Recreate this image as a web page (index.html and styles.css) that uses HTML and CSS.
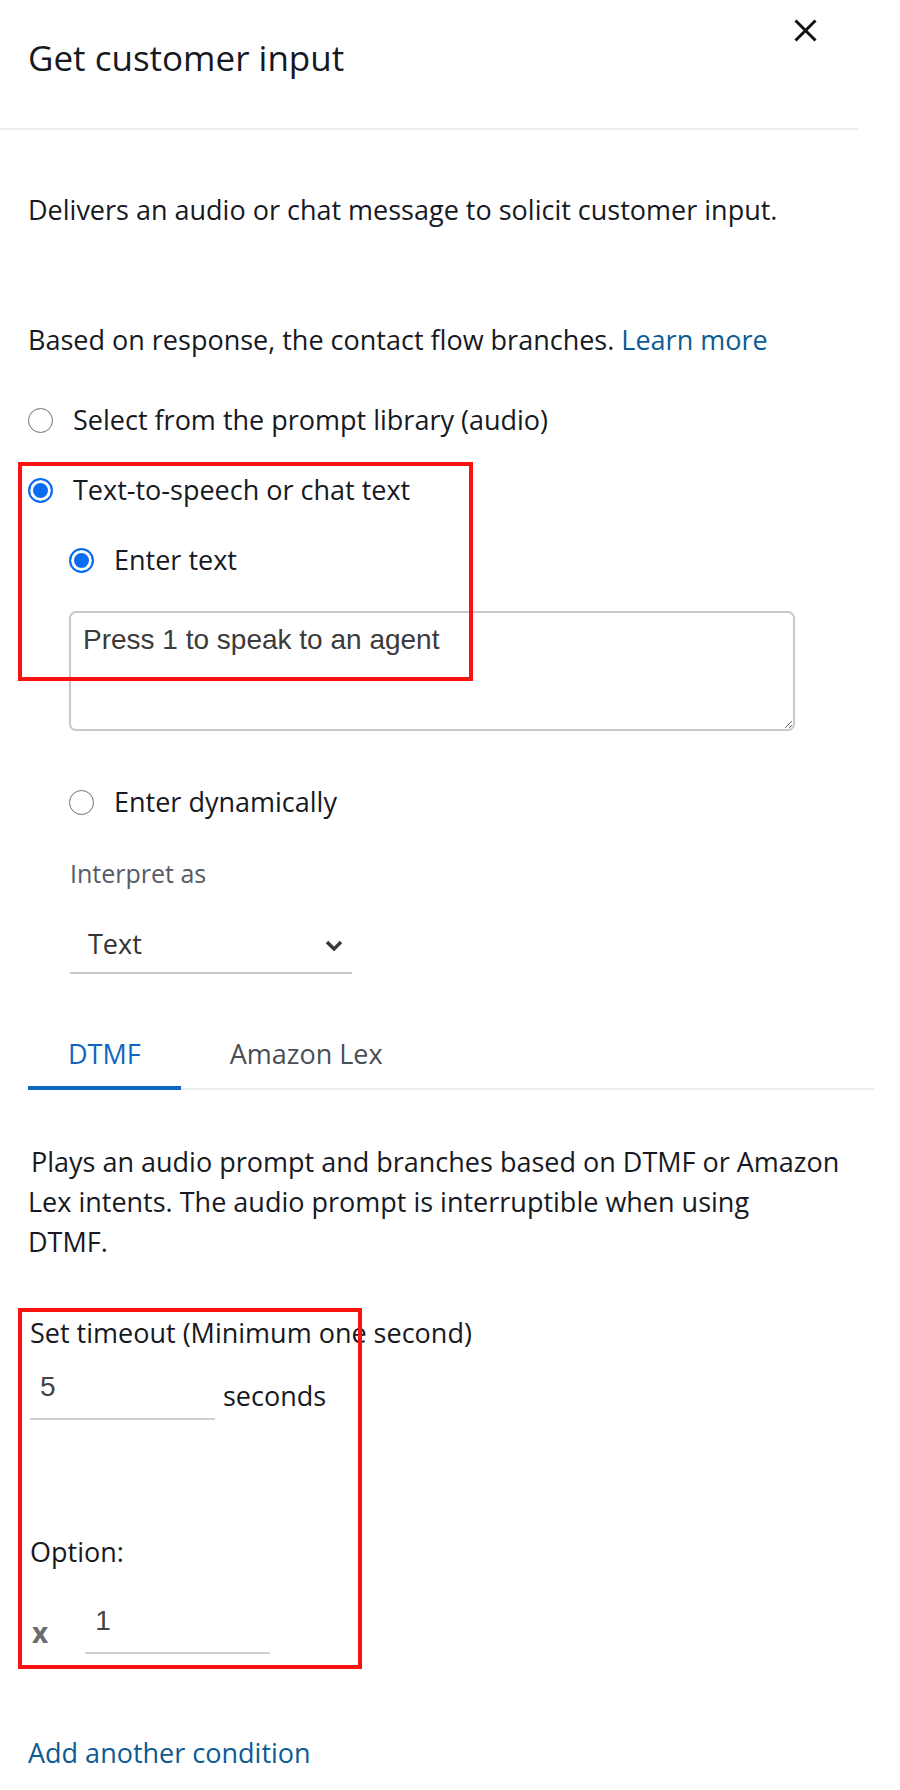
FILE: index.html
```html
<!DOCTYPE html>
<html lang="en">
<head>
<meta charset="utf-8">
<title>Get customer input</title>
<link rel="stylesheet" href="styles.css">
</head>
<body>
<div class="panel">
  <header class="panel-header">
    <h1 class="title">Get customer input</h1>
    <button class="close" aria-label="Close">
      <svg width="23" height="23" viewBox="0 0 23 23"><path d="M1.5 1.5 L21.5 21.5 M21.5 1.5 L1.5 21.5" stroke="#111" stroke-width="3" fill="none"/></svg>
    </button>
  </header>

  <div class="panel-body">
    <p class="desc">Delivers an audio or chat message to solicit customer input.</p>
    <p class="desc branch">Based on response, the contact flow branches. <a class="link" href="#">Learn more</a></p>

    <div class="radio-row first"><span class="radio"></span><span>Select from the prompt library (audio)</span></div>
    <div class="radio-row"><span class="radio checked"></span><span>Text-to-speech or chat text</span></div>

    <div class="sub">
      <div class="radio-row"><span class="radio checked"></span><span>Enter text</span></div>
      <textarea class="tts">Press 1 to speak to an agent</textarea>
      <div class="radio-row dynamic"><span class="radio"></span><span>Enter dynamically</span></div>
      <div class="field-label">Interpret as</div>
      <div class="select">
        <span>Text</span>
        <svg width="18" height="11" viewBox="0 0 18 11"><path d="M2 2 L9 9 L16 2" stroke="#3a3a3a" stroke-width="3.4" fill="none"/></svg>
      </div>
    </div>

    <div class="tabs">
      <div class="tab active">DTMF</div>
      <div class="tab">Amazon Lex</div>
    </div>

    <p class="tab-desc">Plays an audio prompt and branches based on DTMF or Amazon Lex intents. The audio prompt is interruptible when using<br>DTMF.</p>

    <div class="dtmf">
      <div class="timeout-label">Set timeout (Minimum one second)</div>
      <div class="timeout-row">
        <input class="line-input" type="text" value="5">
        <span class="unit">seconds</span>
      </div>
      <div class="option-label">Option:</div>
      <div class="option-row">
        <span class="remove">x</span>
        <input class="line-input option-input" type="text" value="1">
      </div>
    </div>

    <a class="link add" href="#">Add another condition</a>
  </div>

  <div class="annot annot-1"></div>
  <div class="annot annot-2"></div>
</div>
</body>
</html>
```

FILE: styles.css
```css
html, body {
  margin: 0;
  padding: 0;
  background: #fff;
}

body {
  font-family: "Open Sans", "Liberation Sans", sans-serif;
  font-size: 27px;
  line-height: 40px;
  color: #16191f;
}

.panel {
  position: relative;
  width: 900px;
  height: 1790px;
  overflow: hidden;
}

/* header */
.panel-header {
  box-sizing: border-box;
  width: 858px;
  height: 130px;
  padding: 19px 41px 0 28px;
  border-bottom: 2px solid #eaeded;
  display: flex;
  justify-content: space-between;
  align-items: flex-start;
}

.title {
  margin: 15px 0 0;
  font-size: 35px;
  line-height: 48px;
  font-weight: 400;
  color: #16191f;
}

.close {
  border: 0;
  padding: 0;
  margin: 0;
  background: none;
  width: 23px;
  height: 23px;
  display: block;
}

.close svg {
  display: block;
}

/* body */
.panel-body {
  padding-left: 28px;
  display: flex;
  flex-direction: column;
  align-items: flex-start;
}

.desc {
  margin: 60px 0 0;
}

.desc.branch {
  margin-top: 90px;
}

.link {
  color: #0d5b91;
  text-decoration: none;
}

.radio-row {
  display: flex;
  align-items: center;
  height: 40px;
  margin-top: 30px;
}

.radio-row.first {
  margin-top: 40px;
}

.radio {
  box-sizing: border-box;
  width: 25px;
  height: 25px;
  border-radius: 50%;
  border: 1.6px solid #6f6f6f;
  margin-right: 20px;
  flex: none;
  background: #fff;
}

.radio.checked {
  border: 2.6px solid #0a6cf2;
  background: #0a6cf2;
  box-shadow: inset 0 0 0 3px #fff;
}

.sub {
  margin-left: 41px;
  display: flex;
  flex-direction: column;
  align-items: flex-start;
}

.tts {
  box-sizing: border-box;
  display: block;
  width: 726px;
  height: 120px;
  margin-top: 31px;
  padding: 11px 12px;
  border: 2px solid #c9c9c9;
  border-radius: 7px;
  font-family: "Liberation Sans", Arial, sans-serif;
  font-size: 28px;
  line-height: 32px;
  color: #3b3b3b;
  outline: none;
}

.radio-row.dynamic {
  margin-top: 51px;
}

.field-label {
  margin: 33px 0 0 1px;
  font-size: 25px;
  line-height: 36px;
  color: #545b64;
}

.select {
  box-sizing: border-box;
  margin: 33px 0 0 1px;
  width: 282px;
  height: 50px;
  padding: 0 9px 0 18px;
  border-bottom: 2px solid #c8c8c8;
  display: flex;
  justify-content: space-between;
  align-items: flex-start;
  color: #333;
}

.select svg {
  margin-top: 16px;
}

/* tabs */
.tabs {
  margin-top: 60px;
  width: 846px;
  display: flex;
  border-bottom: 2px solid #eaeded;
}

.tab {
  padding: 0 40px 12px;
  border-bottom: 4px solid transparent;
  margin-bottom: -2px;
  color: #4a4f55;
}

.tab + .tab {
  margin-left: 9px;
}

.tab.active {
  color: #0f66c0;
  border-bottom-color: #0f66c0;
}

.tab-desc {
  margin: 52px 0 0;
  width: 846px;
  text-indent: 3px;
}

/* dtmf */
.dtmf {
  margin-left: 2px;
  display: flex;
  flex-direction: column;
  align-items: flex-start;
}

.timeout-label {
  margin-top: 51px;
}

.timeout-row {
  margin-top: 18px;
  display: flex;
  align-items: center;
}

.line-input {
  box-sizing: border-box;
  width: 185px;
  height: 49px;
  padding: 0 10px 15px;
  border: 0;
  border-bottom: 2px solid #d1d1d1;
  font-family: "Liberation Sans", Arial, sans-serif;
  font-size: 28px;
  line-height: 32px;
  color: #444;
  background: transparent;
  outline: none;
}

.unit {
  margin-left: 8px;
}

.option-label {
  margin-top: 112px;
}

.option-row {
  margin-top: 33px;
  display: flex;
  align-items: flex-end;
}

.remove {
  margin: 0 0 8px 2px;
  font-size: 28px;
  line-height: 28px;
  font-weight: 700;
  color: #6b6b6b;
}

.option-input {
  margin-left: 37px;
}

.add {
  margin-top: 79px;
}

/* annotation boxes drawn over the screenshot */
.annot {
  position: absolute;
  box-sizing: border-box;
  border: 4px solid #fd1212;
  pointer-events: none;
}

.annot-1 {
  left: 18px;
  top: 462px;
  width: 455px;
  height: 219px;
}

.annot-2 {
  left: 18px;
  top: 1308px;
  width: 344px;
  height: 361px;
}
```
